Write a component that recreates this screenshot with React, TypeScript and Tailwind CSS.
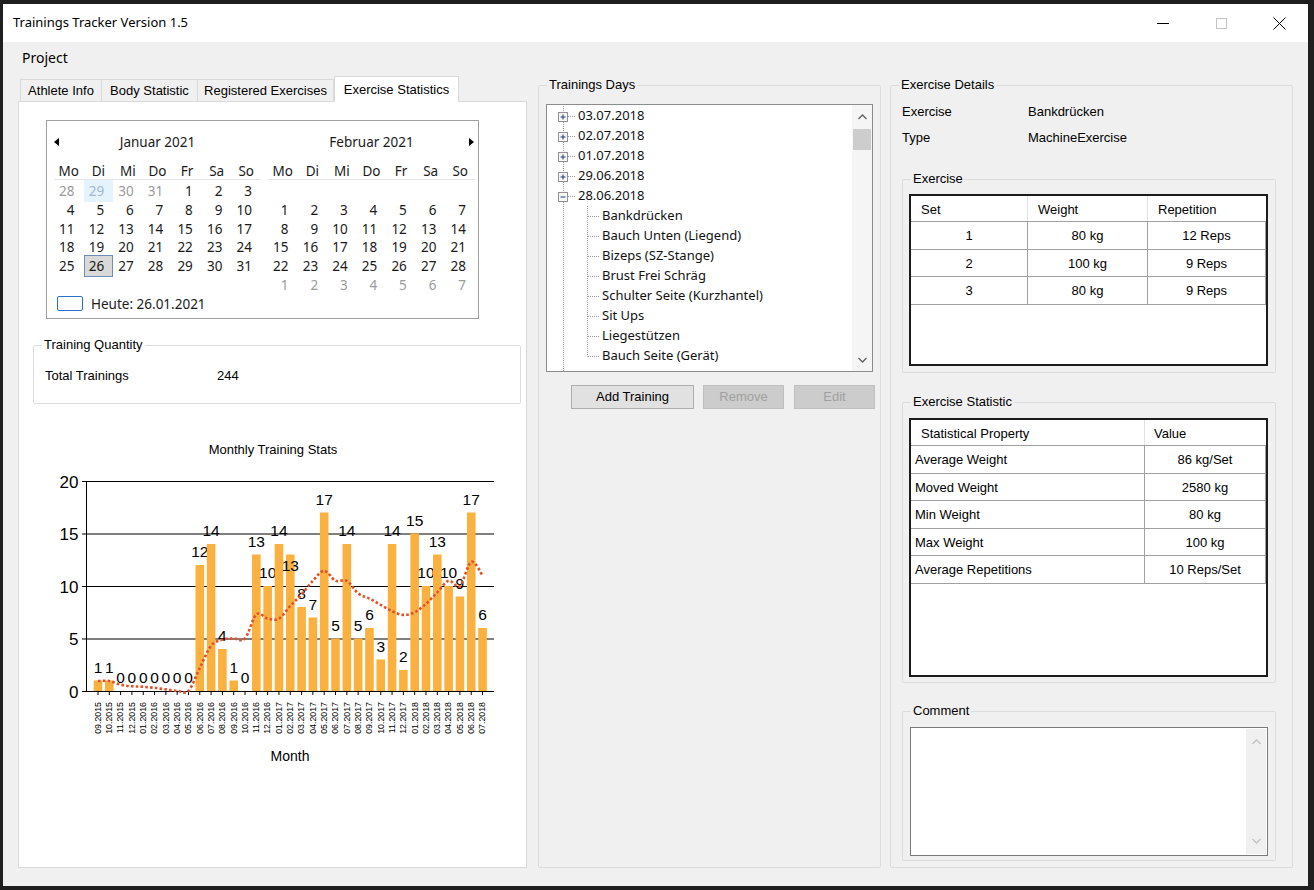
import React from "react";

const SEGOE = "font-['Noto_Sans','DejaVu_Sans',sans-serif]";

// --- chart data ---
const values = [1, 1, 0, 0, 0, 0, 0, 0, 0, 12, 14, 4, 1, 0, 13, 10, 14, 13, 8, 7, 17, 5, 14, 5, 6, 3, 14, 2, 15, 10, 13, 10, 9, 17, 6];
const trend = [0.95, 0.95, 0.6, 0.45, 0.4, 0.3, 0.15, 0.02, 0.02, 2.2, 4.3, 4.9, 5.0, 5.0, 7.3, 6.9, 6.9, 8.1, 9.2, 10.5, 11.45, 10.5, 10.5, 9.3, 8.8, 8.2, 7.6, 7.25, 7.5, 8.3, 9.4, 10.5, 10.0, 12.3, 11.0];

const months: string[] = [];
{
  let y = 2015;
  let m = 9;
  for (let i = 0; i < 35; i++) {
    months.push(`${String(m).padStart(2, "0")}.${y}`);
    m++;
    if (m > 12) {
      m = 1;
      y++;
    }
  }
}

function smoothPath(pts: number[][]) {
  let d = `M${pts[0][0]},${pts[0][1]}`;
  for (let i = 0; i < pts.length - 1; i++) {
    const p0 = pts[i - 1] || pts[i];
    const p1 = pts[i];
    const p2 = pts[i + 1];
    const p3 = pts[i + 2] || p2;
    const c1x = p1[0] + (p2[0] - p0[0]) / 6;
    const c1y = p1[1] + (p2[1] - p0[1]) / 6;
    const c2x = p2[0] - (p3[0] - p1[0]) / 6;
    const c2y = p2[1] - (p3[1] - p1[1]) / 6;
    d += ` C${c1x.toFixed(1)},${c1y.toFixed(1)} ${c2x.toFixed(1)},${c2y.toFixed(1)} ${p2[0].toFixed(1)},${p2[1].toFixed(1)}`;
  }
  return d;
}

function Chart() {
  const x0 = 46;
  const x1 = 454;
  const base = 252;
  const k = 10.5;
  const cx = (i: number) => 58 + i * 11.31;
  const pts = trend.map((v, i) => [cx(i), base - v * k]);
  return (
    <svg width="480" height="330" className="ml-[21px] mt-[35px] block font-['Liberation_Sans',Arial,sans-serif]">
      <text x="233" y="15" textAnchor="middle" fontSize="13" fill="#000">Monthly Training Stats</text>
      {[0, 5, 10, 15, 20].map((g) => (
        <g key={g}>
          <line x1={x0 - 4} x2={x1} y1={base - g * k + 0.5} y2={base - g * k + 0.5} stroke="#000" strokeWidth="1" />
          <text x="38.5" y={base - g * k + 6.5} textAnchor="end" fontSize="17" fill="#000">{g}</text>
        </g>
      ))}
      <line x1={x0 + 0.5} x2={x0 + 0.5} y1={base - 20 * k} y2={base + 1} stroke="#000" />
      {values.map((v, i) => (
        <g key={i}>
          <rect x={cx(i) - 4.3} y={base - v * k} width="8.6" height={v * k} fill="#fbb13f" />
          <line x1={cx(i)} x2={cx(i)} y1={base} y2={base + 4} stroke="#000" />
          <text x={cx(i)} y={i === 17 ? base - v * k + 16 : base - v * k - 8} textAnchor="middle" fontSize="15.5" fill="#000">{v}</text>
          <text
            transform={`translate(${cx(i) + 0.5},${base + 11}) rotate(-90)`}
            textAnchor="end"
            dominantBaseline="middle"
            fontSize="8.8"
            fill="#000"
          >
            {months[i]}
          </text>
        </g>
      ))}
      <path d={smoothPath(pts)} fill="none" stroke="#e4502a" strokeWidth="2.6" strokeDasharray="2.6 2.2" />
      <text x="250" y="322" textAnchor="middle" fontSize="14" fill="#000">Month</text>
    </svg>
  );
}

// --- calendar ---
type Day = { d: number | null; g?: boolean; hover?: boolean; sel?: boolean };

const janRows: Day[][] = [
  [{ d: 28, g: true }, { d: 29, g: true, hover: true }, { d: 30, g: true }, { d: 31, g: true }, { d: 1 }, { d: 2 }, { d: 3 }],
  [4, 5, 6, 7, 8, 9, 10].map((d) => ({ d })),
  [11, 12, 13, 14, 15, 16, 17].map((d) => ({ d })),
  [18, 19, 20, 21, 22, 23, 24].map((d) => ({ d })),
  [{ d: 25 }, { d: 26, sel: true }, { d: 27 }, { d: 28 }, { d: 29 }, { d: 30 }, { d: 31 }],
  [null, null, null, null, null, null, null].map((d) => ({ d })),
];
const febRows: Day[][] = [
  [null, null, null, null, null, null, null].map((d) => ({ d })),
  [1, 2, 3, 4, 5, 6, 7].map((d) => ({ d })),
  [8, 9, 10, 11, 12, 13, 14].map((d) => ({ d })),
  [15, 16, 17, 18, 19, 20, 21].map((d) => ({ d })),
  [22, 23, 24, 25, 26, 27, 28].map((d) => ({ d })),
  [1, 2, 3, 4, 5, 6, 7].map((d) => ({ d, g: true })),
];
const dayNames = ["Mo", "Di", "Mi", "Do", "Fr", "Sa", "So"];

function Month({ title, rows, arrow }: { title: string; rows: Day[][]; arrow: "left" | "right" }) {
  return (
    <div className="w-[207px]">
      <div className="flex h-[20px] items-center">
        <div className="flex w-[14px] items-center">
          {arrow === "left" && (
            <svg width="6" height="8"><path d="M5 0 L0 4 L5 8 Z" fill="#000" /></svg>
          )}
        </div>
        <div className="flex-1 text-center">{title}</div>
        <div className="flex w-[14px] items-center justify-end">
          {arrow === "right" && (
            <svg width="6" height="8"><path d="M0 0 L5 4 L0 8 Z" fill="#000" /></svg>
          )}
        </div>
      </div>
      <div className="mt-[8px] grid h-[20px] grid-cols-7 border-b border-[#e6e6e6] leading-[22px]">
        {dayNames.map((n) => (
          <div key={n} className="text-center">{n}</div>
        ))}
      </div>
      {rows.map((r, ri) => (
        <div key={ri} className="grid h-[18.8px] grid-cols-7 leading-[22px]">
          {r.map((c, ci) => (
            <div
              key={ci}
              className={
                c.sel
                  ? "border border-[#6f8db5] bg-[#d9d9d9] pr-[8px] text-right leading-[20px]"
                  : c.hover
                  ? "bg-[#e5f3ff] pr-[9px] text-right text-[#a3b5db]"
                  : c.g
                  ? "pr-[9px] text-right text-[#9a9a9a]"
                  : "pr-[9px] text-right"
              }
            >
              {c.d ?? ""}
            </div>
          ))}
        </div>
      ))}
    </div>
  );
}

function Calendar() {
  return (
    <div className={`ml-[27px] mt-[18px] h-[199px] w-[433px] border border-[#a0a0a0] bg-white ${SEGOE} text-[13.5px] text-[#1a1a1a]`}>
      <div className="flex gap-[7px] pl-[7px] pt-[11px]">
        <Month title="Januar 2021" rows={janRows} arrow="left" />
        <Month title="Februar 2021" rows={febRows} arrow="right" />
      </div>
      <div className="mt-[2px] flex h-[18px] items-center pl-[10px]">
        <div className="h-[15px] w-[26px] rounded-[2px] border-[1.5px] border-[#2a6fcf]" />
        <span className="ml-[8px]">Heute: 26.01.2021</span>
      </div>
    </div>
  );
}

// --- generic pieces ---
function Group({ title, className, children }: { title: string; className?: string; children?: React.ReactNode }) {
  return (
    <fieldset className={`rounded-[2px] border border-[#dcdcdc] ${className ?? ""}`}>
      <legend className="ml-[8px] px-[2px] leading-[18px]">{title}</legend>
      {children}
    </fieldset>
  );
}

function Chevron({ dir, color }: { dir: "up" | "down"; color: string }) {
  return (
    <svg width="9" height="6">
      <path d={dir === "up" ? "M0.5 5 L4.5 1 L8.5 5" : "M0.5 1 L4.5 5 L8.5 1"} fill="none" stroke={color} strokeWidth="1.3" />
    </svg>
  );
}

// --- tree ---
const dotted = { stroke: "#9a9a9a", strokeDasharray: "1 1", strokeWidth: 1 };

function RootRow({ label, open }: { label: string; open?: boolean }) {
  return (
    <div className="flex h-[20px] items-center">
      <svg width="31" height="20" className="shrink-0">
        <line x1="16.5" x2="16.5" y1="0" y2="20" {...dotted} />
        <line x1="21" x2="29" y1="10.5" y2="10.5" {...dotted} />
        <rect x="11.5" y="6.5" width="9" height="9" fill="#f7f7f7" stroke="#919191" />
        <line x1="13.5" x2="18.5" y1="11" y2="11" stroke="#1e3a74" />
        {!open && <line x1="16" x2="16" y1="8.5" y2="13.5" stroke="#1e3a74" />}
      </svg>
      <span>{label}</span>
    </div>
  );
}

function ChildRow({ label, last }: { label: string; last?: boolean }) {
  return (
    <div className="flex h-[20px] items-center">
      <svg width="55" height="20" className="shrink-0">
        <line x1="16.5" x2="16.5" y1="0" y2="20" {...dotted} />
        <line x1="40.5" x2="40.5" y1="0" y2={last ? 10.5 : 20} {...dotted} />
        <line x1="41" x2="52" y1="10.5" y2="10.5" {...dotted} />
      </svg>
      <span>{label}</span>
    </div>
  );
}

const childLabels = [
  "Bankdrücken",
  "Bauch Unten (Liegend)",
  "Bizeps (SZ-Stange)",
  "Brust Frei Schräg",
  "Schulter Seite (Kurzhantel)",
  "Sit Ups",
  "Liegestützen",
  "Bauch Seite (Gerät)",
];

function Tree() {
  return (
    <div className={`ml-[7px] mt-[10px] flex h-[268px] w-[327px] border border-[#8c8c8c] bg-white ${SEGOE} text-[13px] text-[#111]`}>
      <div className="flex-1 overflow-hidden pt-px">
        {["03.07.2018", "02.07.2018", "01.07.2018", "29.06.2018"].map((d) => (
          <RootRow key={d} label={d} />
        ))}
        <RootRow label="28.06.2018" open />
        {childLabels.map((c, i) => (
          <ChildRow key={c} label={c} last={i === childLabels.length - 1} />
        ))}
        <RootRow label="24.06.2018" />
      </div>
      <div className="flex w-[20px] flex-col items-center bg-[#f5f5f5]">
        <div className="flex h-[24px] items-center"><Chevron dir="up" color="#606060" /></div>
        <div className="h-[21px] w-[18px] bg-[#cdcdcd]" />
        <div className="flex-1" />
        <div className="flex h-[22px] items-center"><Chevron dir="down" color="#606060" /></div>
      </div>
    </div>
  );
}

// --- data grids ---
function SetsGrid() {
  const rows = [
    ["1", "80 kg", "12 Reps"],
    ["2", "100 kg", "9 Reps"],
    ["3", "80 kg", "9 Reps"],
  ];
  return (
    <div className="ml-[6px] mt-[6px] h-[172px] w-[359px] border-2 border-[#1c1c1c] bg-white">
      <div className="flex h-[26px] border-b border-[#a0a0a0] leading-[27px]">
        <div className="w-[117px] border-r border-[#e2e2e2] pl-[10px]">Set</div>
        <div className="w-[120px] border-r border-[#e2e2e2] pl-[10px]">Weight</div>
        <div className="flex-1 pl-[10px]">Repetition</div>
      </div>
      {rows.map((r) => (
        <div key={r[0]} className="flex h-[27.5px] border-b border-[#a0a0a0] leading-[27px]">
          <div className="w-[117px] border-r border-[#a0a0a0] text-center">{r[0]}</div>
          <div className="w-[120px] border-r border-[#a0a0a0] text-center">{r[1]}</div>
          <div className="flex-1 border-r border-[#a0a0a0] text-center">{r[2]}</div>
        </div>
      ))}
    </div>
  );
}

function StatsGrid() {
  const rows = [
    ["Average Weight", "86 kg/Set"],
    ["Moved Weight", "2580 kg"],
    ["Min Weight", "80 kg"],
    ["Max Weight", "100 kg"],
    ["Average Repetitions", "10 Reps/Set"],
  ];
  return (
    <div className="ml-[6px] mt-[7px] h-[259px] w-[359px] border-2 border-[#1c1c1c] bg-white">
      <div className="flex h-[26px] border-b border-[#a0a0a0] leading-[27px]">
        <div className="w-[234px] border-r border-[#e2e2e2] pl-[10px]">Statistical Property</div>
        <div className="flex-1 pl-[9px]">Value</div>
      </div>
      {rows.map((r) => (
        <div key={r[0]} className="flex h-[27.5px] border-b border-[#a0a0a0] leading-[27px]">
          <div className="w-[234px] border-r border-[#a0a0a0] pl-[4px]">{r[0]}</div>
          <div className="flex-1 border-r border-[#a0a0a0] text-center">{r[1]}</div>
        </div>
      ))}
    </div>
  );
}

function TabStrip() {
  const tab = "flex h-[22px] items-center justify-center border border-b-0 border-[#d9d9d9] bg-[#f0f0f0]";
  return (
    <div className="flex h-[25px] items-end pl-[2px]">
      <div className={`${tab} w-[82px]`}>Athlete Info</div>
      <div className={`${tab} w-[96px] border-l-0`}>Body Statistic</div>
      <div className={`${tab} w-[136px] border-l-0`}>Registered Exercises</div>
      <div className="relative z-10 -mb-px flex h-[26px] w-[125px] items-start justify-center border border-b-0 border-[#d9d9d9] bg-white pt-[3px]">
        Exercise Statistics
      </div>
    </div>
  );
}

export default function App() {
  return (
    <div className="h-[890px] w-[1314px] bg-[#1f1f1f] pb-[4px] pl-[3px] pr-[6px] pt-[4px] font-['Liberation_Sans',Arial,sans-serif] text-[13px] text-black">
      <div className="flex h-full flex-col bg-[#f0f0f0]">
        {/* Title bar */}
        <div className={`flex h-[38px] items-center bg-white ${SEGOE}`}>
          <div className="flex-1 pl-[10px] text-[13px]">Trainings Tracker Version 1.5</div>
          <div className="flex h-full w-[58px] items-center justify-center">
            <div className="h-px w-[12px] bg-black" />
          </div>
          <div className="flex h-full w-[58px] items-center justify-center">
            <div className="h-[11px] w-[11px] border border-[#c4c4c4]" />
          </div>
          <div className="flex h-full w-[58px] items-center justify-center">
            <svg width="13" height="13">
              <path d="M0.5 0.5 L12.5 12.5 M12.5 0.5 L0.5 12.5" stroke="#000" strokeWidth="1" />
            </svg>
          </div>
        </div>

        {/* Menu */}
        <div className={`flex h-[30px] items-center pl-[19px] text-[14px] ${SEGOE}`}>Project</div>

        {/* Main */}
        <div className="flex min-h-0 flex-1 pb-[18px] pl-[15px] pr-[15px] pt-[4px]">
          {/* Left: tab control */}
          <div className="flex w-[509px] flex-col">
            <TabStrip />
            <div className="flex-1 border border-[#d9d9d9] bg-white">
              <Calendar />
              <Group title="Training Quantity" className="ml-[14px] mt-[17px] w-[488px] pb-[19px]">
                <div className="mt-[14px] flex h-[16px] items-center pl-[11px]">
                  <div className="w-[172px]">Total Trainings</div>
                  <div>244</div>
                </div>
              </Group>
              <Chart />
            </div>
          </div>

          {/* Middle: training days */}
          <Group title="Trainings Days" className="ml-[11px] w-[343px]">
            <Tree />
            <div className="mt-[13px] flex h-[24px]">
              <div className="ml-[32px] flex w-[123px] items-center justify-center border border-[#adadad] bg-[#e1e1e1]">Add Training</div>
              <div className="ml-[9px] flex w-[81px] items-center justify-center border border-[#bfbfbf] bg-[#cccccc] text-[#a0a0a0]">Remove</div>
              <div className="ml-[10px] flex w-[81px] items-center justify-center border border-[#bfbfbf] bg-[#cccccc] text-[#a0a0a0]">Edit</div>
            </div>
          </Group>

          {/* Right: exercise details */}
          <Group title="Exercise Details" className="ml-[9px] w-[403px]">
            <div className="mt-[10px] flex h-[16px] items-center pl-[11px]">
              <div className="w-[126px]">Exercise</div>
              <div>Bankdrücken</div>
            </div>
            <div className="mt-[10px] flex h-[16px] items-center pl-[11px]">
              <div className="w-[126px]">Type</div>
              <div>MachineExercise</div>
            </div>
            <Group title="Exercise" className="ml-[11px] mt-[24px] w-[374px] pb-[6px]">
              <SetsGrid />
            </Group>
            <Group title="Exercise Statistic" className="ml-[11px] mt-[20px] w-[374px] pb-[5px]">
              <StatsGrid />
            </Group>
            <Group title="Comment" className="ml-[11px] mt-[19px] w-[374px] pb-[4px]">
              <div className="ml-[7px] mt-[7px] flex h-[129px] w-[358px] border border-[#7a7a7a] bg-white">
                <div className="flex-1" />
                <div className="my-px mr-px flex w-[20px] flex-col items-center justify-between bg-[#f0f0f0] py-[10px]">
                  <Chevron dir="up" color="#c2c2c2" />
                  <Chevron dir="down" color="#c2c2c2" />
                </div>
              </div>
            </Group>
          </Group>
        </div>
      </div>
    </div>
  );
}
